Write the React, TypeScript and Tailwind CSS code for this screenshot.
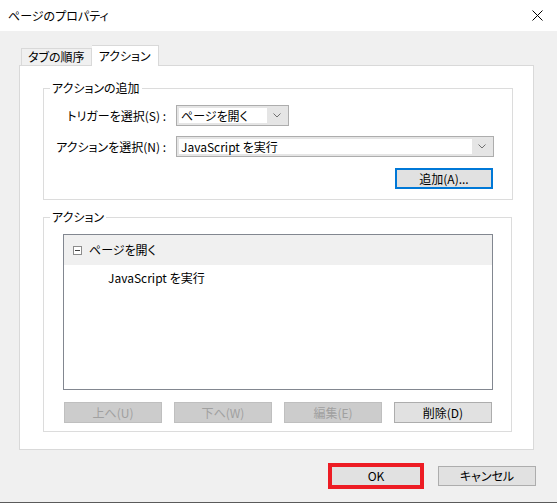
import React from 'react'

const Chevron = () => (
  <svg width="8" height="5" viewBox="0 0 8 5" className="text-[#707070]">
    <polyline points="0.5,0.5 4,4 7.5,0.5" fill="none" stroke="currentColor" strokeWidth="1" />
  </svg>
)

function Combo({ value, width }: { value: string; width: string }) {
  return (
    <div className={`${width} h-[21px] flex items-stretch border border-[#adadad] bg-[#e5e5e5] p-[2px]`}>
      <div className="flex-1 bg-white flex items-center pl-[2px] text-black">{value}</div>
      <div className="w-[19px] flex items-center justify-center">
        <Chevron />
      </div>
    </div>
  )
}

function Btn({ label, disabled }: { label: string; disabled?: boolean }) {
  return (
    <div
      className={
        disabled
          ? 'w-[98px] h-[21px] flex items-center justify-center border border-[#bfbfbf] bg-[#cccccc] text-[#a0a0a0]'
          : 'w-[98px] h-[21px] flex items-center justify-center border border-[#adadad] bg-[#e1e1e1] text-black'
      }
    >
      {label}
    </div>
  )
}

export default function App() {
  return (
    <div className="w-[557px] h-[503px] flex flex-col bg-[#f0f0f0] border-b border-[#5a5a5a] text-[12px] leading-[16px] text-black font-['Noto_Sans_CJK_JP','Noto_Sans',sans-serif] [font-feature-settings:'palt']">
      {/* Title bar */}
      <div className="h-[31px] shrink-0 bg-white flex items-center justify-between pl-[8px] pr-[14px]">
        <span>ページのプロパティ</span>
        <svg width="11" height="11" viewBox="0 0 11 11">
          <path d="M0.5 0.5 L10.5 10.5 M10.5 0.5 L0.5 10.5" stroke="#000" strokeWidth="1" />
        </svg>
      </div>

      {/* Tabs + panel */}
      <div className="pl-[19px] pr-[23px] pt-[14px]">
        <div className="flex items-end pl-[2px]">
          <div className="h-[17px] px-[6px] flex items-center border border-b-0 border-[#d9d9d9] bg-[#f0f0f0]">
            タブの順序
          </div>
          <div className="relative z-10 -mb-px h-[21px] px-[7px] flex items-center border border-b-0 border-l-0 border-[#d9d9d9] bg-white">
            アクション
          </div>
        </div>

        <div className="h-[385px] border border-[#d9d9d9] bg-white pl-[23px] pr-[21px] pt-[14px]">
          {/* アクションの追加 */}
          <fieldset className="border border-[#dcdcdc] pt-[9px] pr-[18px] pb-[10px]">
            <legend className="ml-[6px] px-[2px]">アクションの追加</legend>
            <div className="grid grid-cols-[122px_auto] gap-x-[10px] gap-y-[10px] items-center">
              <span className="text-right">トリガーを選択(S) :</span>
              <Combo value="ページを開く" width="w-[113px]" />
              <span className="text-right">アクションを選択(N) :</span>
              <Combo value="JavaScript を実行" width="w-[318px]" />
            </div>
            <div className="flex justify-end mt-[11px] mr-[1px]">
              <div className="w-[98px] h-[21px] flex items-center justify-center border-2 border-[#0078d7] bg-[#e1e1e1]">
                追加(A)...
              </div>
            </div>
          </fieldset>

          {/* アクション */}
          <fieldset className="mt-[9px] border border-[#dcdcdc] pt-[9px] pr-[18px] pb-[8px]">
            <legend className="ml-[6px] px-[2px]">アクション</legend>
            <div className="pl-[19px]">
              <div className="h-[156px] border border-[#828790] bg-white">
                <div className="h-[30px] bg-[#f0f0f0] flex items-center pl-[9px] gap-[7px]">
                  <svg width="9" height="9" viewBox="0 0 9 9">
                    <rect x="0.5" y="0.5" width="8" height="8" fill="#fff" stroke="#8c8c8c" />
                    <path d="M2 4.5 H7" stroke="#404040" />
                  </svg>
                  <span>ページを開く</span>
                </div>
                <div className="h-[26px] flex items-center pl-[44px]">JavaScript を実行</div>
              </div>
              <div className="flex gap-[12px] mt-[12px] ml-[1px]">
                <Btn label="上へ(U)" disabled />
                <Btn label="下へ(W)" disabled />
                <Btn label="編集(E)" disabled />
                <Btn label="削除(D)" />
              </div>
            </div>
          </fieldset>
        </div>
      </div>

      {/* Footer */}
      <div className="flex-1 flex items-center justify-end gap-[14px] pr-[21px]">
        <div className="w-[96px] h-[26px] flex items-center justify-center border-4 border-[#ed1c24] bg-[#e1e1e1]">
          OK
        </div>
        <div className="w-[98px] h-[20px] flex items-center justify-center border border-[#adadad] bg-[#e1e1e1]">
          キャンセル
        </div>
      </div>
    </div>
  )
}
